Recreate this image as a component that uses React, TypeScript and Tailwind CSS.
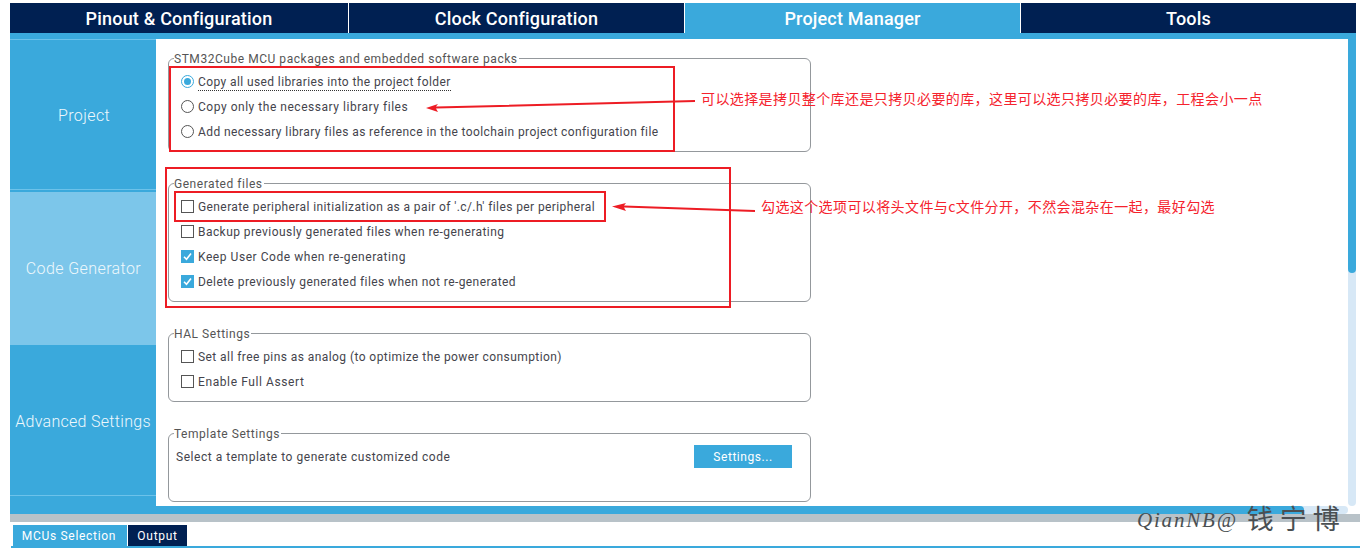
import React from 'react';

const tabs = [
  { label: 'Pinout & Configuration', active: false, width: 'w-[338px]' },
  { label: 'Clock Configuration', active: false, width: 'w-[336px]' },
  { label: 'Project Manager', active: true, width: 'w-[336px]' },
  { label: 'Tools', active: false, width: 'w-[336px]' },
];

function Radio({ checked }: { checked?: boolean }) {
  return (
    <span className={`w-[13px] h-[13px] rounded-full border flex items-center justify-center shrink-0 bg-white ${checked ? 'border-[#3aa9dc]' : 'border-[#555]'}`}>
      {checked && <span className="w-[7px] h-[7px] rounded-full bg-[#3aa9dc]" />}
    </span>
  );
}

function Check({ checked }: { checked?: boolean }) {
  if (!checked) return <span className="w-[13px] h-[13px] border border-[#555] bg-white shrink-0" />;
  return (
    <span className="w-[13px] h-[13px] bg-[#3aa9dc] flex items-center justify-center shrink-0">
      <svg width="11" height="11" viewBox="0 0 11 11" fill="none">
        <path d="M2 5.7 L4.5 8.3 L9 2.5" stroke="white" strokeWidth="1.6" />
      </svg>
    </span>
  );
}

function Option({ control, text, dotted, className = '' }: { control: React.ReactNode; text: string; dotted?: boolean; className?: string }) {
  return (
    <div className="h-[25px] flex items-center gap-[4px] pl-[12px]">
      {control}
      <span className={`leading-[16px] ${className} ${dotted ? 'border-b border-dotted border-[#333] mt-[2px]' : ''}`}>{text}</span>
    </div>
  );
}

function Group({ title, className, children }: { title: string; className: string; children: React.ReactNode }) {
  return (
    <fieldset className={`w-[643px] border border-[#94989c] rounded-[6px] ${className}`}>
      <legend className="ml-[5px] pr-[1px] h-[16px] leading-[18px] tracking-[0.54px] text-[#555]">{title}</legend>
      <div className="pt-[3px]">{children}</div>
    </fieldset>
  );
}

export default function App() {
  return (
    <div className="relative w-[1360px] h-[548px] overflow-hidden bg-white pt-[3px] text-[12px] tracking-[0.4px] text-[#44444c] font-['Roboto','Liberation_Sans',sans-serif]">
      <div className="ml-[10px] mr-[4px] flex h-[30px] bg-[#002052]">
        {tabs.map((t, i) => (
          <div
            key={t.label}
            className={`${t.width} flex items-center justify-center text-[18px] font-medium tracking-[0.2px] text-white ${i > 0 ? 'border-l border-white' : ''} ${t.active ? 'bg-[#3aa9dc]' : ''}`}
          >
            {t.label}
          </div>
        ))}
      </div>

      <div className="ml-[10px] mr-[4px] flex h-[481px]">
        <div className="flex-1 flex flex-col min-w-0">
          <div className="h-[6px] bg-[#3aa9dc]" />
          <div className="flex h-[467px] bg-white">
            <div className="w-[146px] flex flex-col text-[16px] font-light tracking-[0.4px] text-[#eef8fc] bg-[#3aa9dc]">
              <div className="h-[151px] pt-[2px] pl-[2px] flex items-center justify-center border-y border-[#6cc2ea]">Project</div>
              <div className="h-[153px] mt-[2px] pl-[1px] flex items-center justify-center bg-[#7cc6ea]">Code Generator</div>
              <div className="h-[151px] pt-[3px] flex items-center justify-center tracking-[0.3px] border-b border-[#6cc2ea]">Advanced Settings</div>
            </div>
            <div className="flex-1 flex flex-col gap-[23px] pl-[12px] pt-[11px]">
              <Group title="STM32Cube MCU packages and embedded software packs" className="h-[102px]">
                <Option control={<Radio checked />} text="Copy all used libraries into the project folder" dotted />
                <Option control={<Radio />} text="Copy only the necessary library files" className="tracking-[0.53px]" />
                <Option control={<Radio />} text="Add necessary library files as reference in the toolchain project configuration file" />
              </Group>
              <Group title="Generated files" className="h-[127px]">
                <Option control={<Check />} text="Generate peripheral initialization as a pair of '.c/.h' files per peripheral" />
                <Option control={<Check />} text="Backup previously generated files when re-generating" className="tracking-[0.44px]" />
                <Option control={<Check checked />} text="Keep User Code when re-generating" className="tracking-[0.55px]" />
                <Option control={<Check checked />} text="Delete previously generated files when not re-generated" className="tracking-[0.42px]" />
              </Group>
              <Group title="HAL Settings" className="h-[77px]">
                <Option control={<Check />} text="Set all free pins as analog (to optimize the power consumption)" className="tracking-[0.43px]" />
                <Option control={<Check />} text="Enable Full Assert" className="tracking-[0.6px]" />
              </Group>
              <Group title="Template Settings" className="h-[77px]">
                <div className="flex items-center justify-between pl-[7px] pr-[18px] h-[23px] mt-[1px]">
                  <span className="tracking-[0.53px]">Select a template to generate customized code</span>
                  <button className="w-[98px] h-[23px] bg-[#3aa9dc] text-white text-center tracking-[0.55px]">Settings...</button>
                </div>
              </Group>
            </div>
          </div>
          <div className="h-[8px] bg-[#d7e8f6] rounded-r-[4px]">
            <div className="w-[1294px] h-[8px] bg-[#3aa9dc] rounded-r-[4px]" />
          </div>
        </div>
        <div className="w-[8px] h-[473px] bg-[#d7e8f6] rounded-b-[4px]">
          <div className="h-[240px] bg-[#3aa9dc] rounded-b-[4px]" />
        </div>
      </div>

      <div className="ml-[10px] h-[8px] bg-[#b8c2c8]" />

      <div className="mt-[3px] ml-[13px] flex gap-[1px] h-[21px] text-white tracking-[0.7px]">
        <div className="w-[114px] pr-[2px] bg-[#3aa9dc] flex items-center justify-center">MCUs Selection</div>
        <div className="w-[59px] bg-[#002052] flex items-center justify-center">Output</div>
      </div>
      <div className="ml-[11px] h-[2px] bg-[#3aa9dc]" />

      {/* annotations drawn over the screenshot */}
      <div className="absolute left-[169px] top-[66px] w-[506px] h-[86px] border-2 border-[#ed1c24]" />
      <div className="absolute left-[165px] top-[167px] w-[566px] h-[141px] border-2 border-[#ed1c24]" />
      <div className="absolute left-[174px] top-[191px] w-[432px] h-[31px] border-2 border-[#ed1c24]" />
      <svg className="absolute left-0 top-0 pointer-events-none" width="1360" height="548">
        <polygon points="695,100 695,102 436,108.5 438,112 426,108 438,104 436,106.5" fill="#ed1c24" />
        <polygon points="755,210 755,212 624,207.5 626,211 612,206.5 626,203 624,205.5" fill="#ed1c24" />
      </svg>
      <div className="absolute left-[701px] top-[88px] text-[14px] leading-[20px] tracking-[0.4px] text-[#f5222d] whitespace-nowrap font-['Noto_Sans_CJK_SC',sans-serif]">
        可以选择是拷贝整个库还是只拷贝必要的库，这里可以选只拷贝必要的库，工程会小一点
      </div>
      <div className="absolute left-[761px] top-[196px] text-[14px] leading-[20px] tracking-[0.4px] text-[#f5222d] whitespace-nowrap font-['Noto_Sans_CJK_SC',sans-serif]">
        勾选这个选项可以将头文件与c文件分开，不然会混杂在一起，最好勾选
      </div>

      {/* watermark */}
      <div className="absolute left-[1137px] top-[498px] h-[40px] flex items-center gap-[9px] text-[#4a4f52] whitespace-nowrap">
        <span className="text-[21px] italic tracking-[1.8px] mt-[5px] font-['Liberation_Serif',serif]">QianNB@</span>
        <span className="text-[27px] tracking-[6px] font-['Noto_Sans_CJK_SC',sans-serif]">钱宁博</span>
      </div>
    </div>
  );
}
